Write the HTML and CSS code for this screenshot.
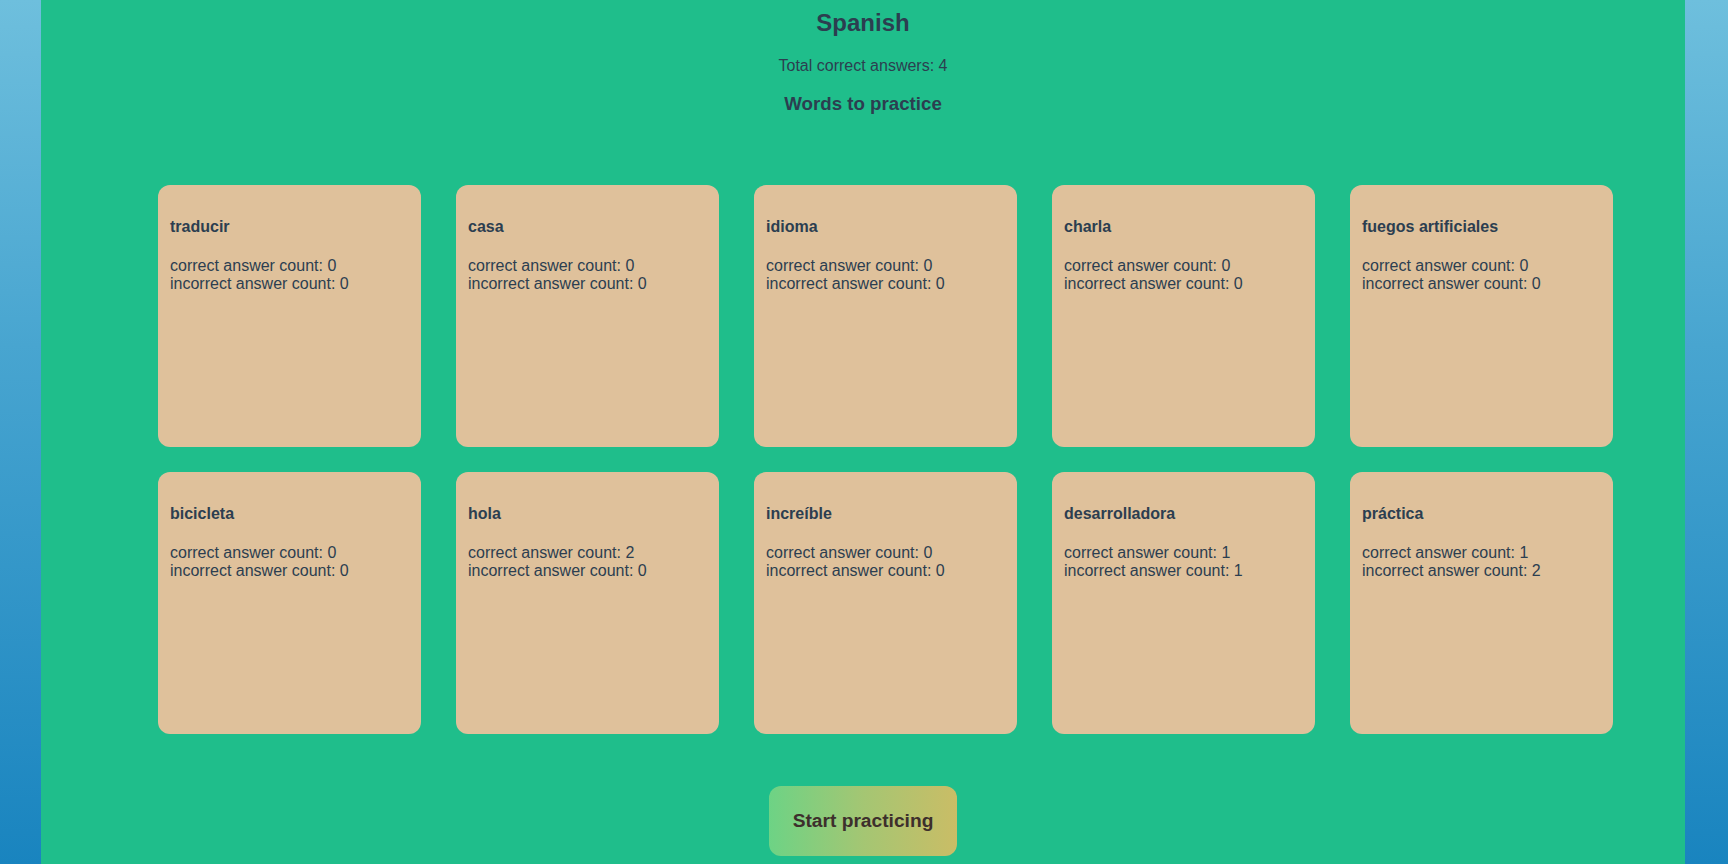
FILE: index.html
```html
<!DOCTYPE html>
<html lang="en">
<head>
<meta charset="utf-8">
<title>Spanish</title>
<link rel="stylesheet" href="styles.css">
</head>
<body>
<div class="app">
  <header class="header">
    <h2 class="title">Spanish</h2>
    <p class="total">Total correct answers: 4</p>
    <h3 class="subtitle">Words to practice</h3>
  </header>
  <ul class="cards">
    <li class="card"><h4 class="word">traducir</h4><p class="stats">correct answer count: 0<br>incorrect answer count: 0</p></li>
    <li class="card"><h4 class="word">casa</h4><p class="stats">correct answer count: 0<br>incorrect answer count: 0</p></li>
    <li class="card"><h4 class="word">idioma</h4><p class="stats">correct answer count: 0<br>incorrect answer count: 0</p></li>
    <li class="card"><h4 class="word">charla</h4><p class="stats">correct answer count: 0<br>incorrect answer count: 0</p></li>
    <li class="card"><h4 class="word">fuegos artificiales</h4><p class="stats">correct answer count: 0<br>incorrect answer count: 0</p></li>
    <li class="card"><h4 class="word">bicicleta</h4><p class="stats">correct answer count: 0<br>incorrect answer count: 0</p></li>
    <li class="card"><h4 class="word">hola</h4><p class="stats">correct answer count: 2<br>incorrect answer count: 0</p></li>
    <li class="card"><h4 class="word">increíble</h4><p class="stats">correct answer count: 0<br>incorrect answer count: 0</p></li>
    <li class="card"><h4 class="word">desarrolladora</h4><p class="stats">correct answer count: 1<br>incorrect answer count: 1</p></li>
    <li class="card"><h4 class="word">práctica</h4><p class="stats">correct answer count: 1<br>incorrect answer count: 2</p></li>
  </ul>
  <div class="actions">
    <button class="start-btn" type="button">Start practicing</button>
  </div>
</div>
</body>
</html>
```

FILE: styles.css
```css
html, body {
  margin: 0;
  padding: 0;
}

body {
  min-height: 100vh;
  background: linear-gradient(180deg, #6ebfdd 0%, #48a5d0 40%, #1984bf 100%);
  padding: 0 43px 0 41px;
  font-family: "Liberation Sans", Arial, Helvetica, sans-serif;
  color: #2c3e50;
}

.app {
  background: #1fbe8b;
  min-height: 100vh;
  padding-top: 9px;
  box-sizing: border-box;
  overflow: hidden;
}

.header {
  text-align: center;
}

.title {
  margin: 0;
  font-size: 24px;
  font-weight: 700;
}

.total {
  margin: 20px 0 0;
  font-size: 16px;
}

.subtitle {
  margin: 17.5px 0 0;
  font-size: 18.72px;
  font-weight: 700;
}

.cards {
  list-style: none;
  margin: 70px 0 0;
  padding: 0 0 0 45px;
  display: grid;
  grid-template-columns: repeat(5, 263px);
  grid-auto-rows: 262px;
  column-gap: 35px;
  row-gap: 25px;
  justify-content: center;
}

.card {
  background: #dfc19b;
  border-radius: 12px;
  padding: 12px;
  box-sizing: border-box;
  font-size: 16px;
}

.word {
  margin: 21.28px 0;
  font-size: 16px;
  font-weight: 700;
}

.stats {
  margin: 0;
}

.actions {
  display: flex;
  justify-content: center;
  margin-top: 52px;
}

.start-btn {
  height: 70px;
  padding: 0 24px;
  border: none;
  border-radius: 12px;
  background: linear-gradient(90deg, #6dd385 0%, #a4c673 50%, #cabd66 100%);
  color: #3d2f2c;
  font-family: "Liberation Sans", Arial, Helvetica, sans-serif;
  font-size: 19.2px;
  font-weight: 700;
  cursor: pointer;
}
```
